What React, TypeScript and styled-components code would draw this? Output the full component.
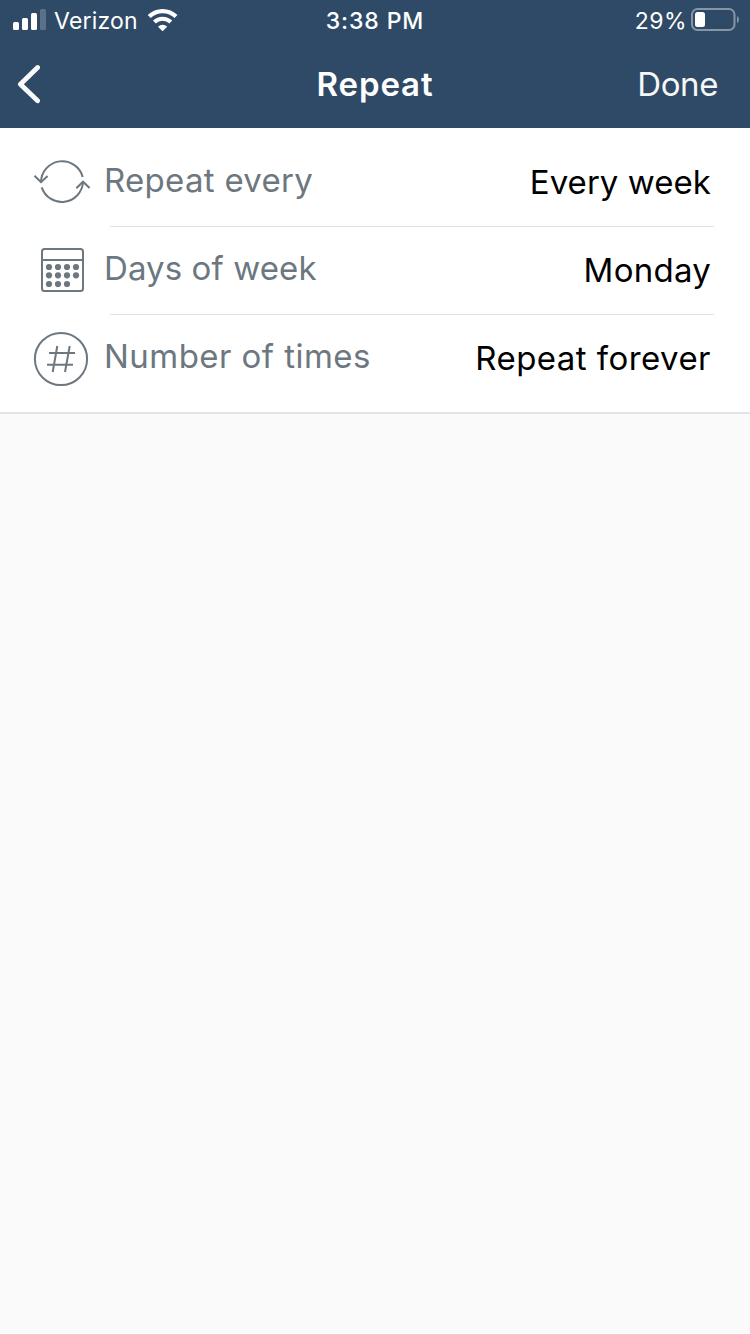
import React from "react";
import styled, { createGlobalStyle } from "styled-components";

const GlobalStyle = createGlobalStyle`
  * { box-sizing: border-box; }
  body {
    margin: 0;
    background: #fafafa;
    font-family: Inter, "Liberation Sans", sans-serif;
  }
`;

const Screen = styled.div`
  display: flex;
  flex-direction: column;
  width: 750px;
  height: 1334px;
  background: #fafafa;
  border-bottom: 1px solid #fff;
`;

const Header = styled.header`
  height: 128px;
  background: #2e4a67;
  color: #fff;
`;

const StatusBar = styled.div`
  display: grid;
  grid-template-columns: 1fr auto 1fr;
  align-items: center;
  height: 40px;
  padding: 0 10px 0 12px;
`;

const StatusGroup = styled.div<{ $end?: boolean }>`
  display: flex;
  align-items: center;
  justify-content: ${(p) => (p.$end ? "flex-end" : "flex-start")};
`;

const StatusText = styled.span<{ $spacing: number }>`
  font-size: 23px;
  line-height: 28px;
  padding-top: 2px;
  letter-spacing: ${(p) => p.$spacing}px;
  white-space: pre;
`;

const Carrier = styled(StatusText)`
  flex: none;
  width: 100px;
  padding-left: 7px;
`;

const Clock = styled(StatusText)`
  margin-right: 2px;
  font-weight: 550;
`;

const BatteryLevel = styled(StatusText)`
  margin-right: 4px;
`;

const NavBar = styled.nav`
  display: grid;
  grid-template-columns: 1fr auto 1fr;
  align-items: center;
  height: 88px;
  padding: 0 32px 0 16px;
`;

const BackButton = styled.button`
  display: flex;
  justify-self: start;
  padding: 0;
  border: 0;
  background: none;
`;

const Title = styled.h1`
  margin: 0 0 0 16px;
  font-size: 33px;
  line-height: 40px;
  font-weight: 600;
  letter-spacing: 0.9px;
`;

const DoneButton = styled.button`
  justify-self: end;
  padding: 0;
  border: 0;
  background: none;
  color: #f7f7f7;
  font: 400 33px/40px Inter, "Liberation Sans", sans-serif;
  letter-spacing: -0.4px;
`;

const List = styled.main`
  padding: 11px 0 9px;
  background: #fff;
  border-bottom: 2px solid #dfe5e8;
`;

const Row = styled.div`
  display: flex;
  height: 88px;
  padding: 0 36px 0 32px;
`;

const IconSlot = styled.div`
  flex: none;
  width: 78px;
  padding-top: 13px;
`;

const RowBody = styled.div<{ $divider: boolean }>`
  flex: 1;
  display: flex;
  justify-content: space-between;
  height: 88px;
  border-bottom: 1px solid ${(p) => (p.$divider ? "#dce5e6" : "transparent")};
`;

const Label = styled.span<{ $spacing: number }>`
  margin: 21px 0 0 -6px;
  font-size: 33px;
  line-height: 40px;
  letter-spacing: ${(p) => p.$spacing}px;
  color: #6c7780;
  white-space: nowrap;
`;

const Value = styled.span<{ $spacing: number }>`
  margin: 23px 3px 0 0;
  font-size: 33px;
  line-height: 40px;
  letter-spacing: ${(p) => p.$spacing}px;
  color: #000;
  white-space: nowrap;
`;

const SignalIcon = () => (
  <svg width="35" height="22" viewBox="12 9 35 22" fill="#fff">
    <rect x="13" y="22" width="6" height="8" rx="1.5" />
    <rect x="22" y="18" width="6" height="12" rx="1.5" />
    <rect x="31" y="13" width="6" height="17" rx="1.5" />
    <rect x="40" y="9" width="6" height="21" rx="1.5" opacity="0.22" />
  </svg>
);

const WifiIcon = () => (
  <svg width="32" height="24" viewBox="147 8 32 24" fill="none" stroke="#fff" strokeWidth="4.2">
    <path d="M149.2 16.6A19 19 0 0 1 176 16.6" />
    <path d="M154.4 22A12 12 0 0 1 170.8 22" />
    <path d="M162.6 31.2L158 26.8A6.4 6.4 0 0 1 167.2 26.8Z" fill="#fff" stroke="none" />
  </svg>
);

const BatteryIcon = () => (
  <svg width="49" height="24" viewBox="691 8 49 24" fill="none">
    <rect x="692" y="9" width="42.5" height="21" rx="5.5" stroke="#8796a6" strokeWidth="2" />
    <rect x="695" y="12" width="10" height="15" rx="2.5" fill="#fff" />
    <path d="M737 16Q739 17 739 19.5T737 23Z" fill="#8796a6" />
  </svg>
);

const BackIcon = () => (
  <svg width="26" height="40" viewBox="16 64 26 40" fill="none" stroke="#fafafa" strokeWidth="4.8" strokeLinecap="round" strokeLinejoin="round">
    <path d="M37.6 67.5L20.4 84.2L37.6 100.8" />
  </svg>
);

const IconSvg = styled.svg`
  display: block;
  width: 60px;
  height: 60px;
  fill: none;
  stroke: #6c7780;
  stroke-width: 2;
`;

const RepeatIcon = () => (
  <IconSvg viewBox="0 0 60 60">
    <path d="M9 30.4A21.2 21.2 0 0 1 50.7 25" />
    <path d="M9.7 35.4A21.2 21.2 0 0 0 51 30" />
    <path d="M2.5 23.7L9 30.2L15.6 24M44.3 36.2L51 29.7L57.6 36" />
  </IconSvg>
);

const CalendarIcon = () => (
  <IconSvg viewBox="0 0 60 60">
    <rect x="10" y="9" width="41" height="42" rx="2.5" />
    <path d="M10 20H51" />
    {[27, 35.3, 44].map((y, r) =>
      [17, 26, 35, 44]
        .slice(0, r === 2 ? 3 : 4)
        .map((x) => <circle key={`${x}-${y}`} cx={x} cy={y} r="3.1" fill="#6c7780" stroke="none" />)
    )}
  </IconSvg>
);

const NumberIcon = () => (
  <IconSvg viewBox="0 0 60 60">
    <circle cx="29" cy="31" r="26.1" />
    <path d="M25.3 18L20.7 44M37.7 18L33 44M17 25H43M15 36.8H41" />
  </IconSvg>
);

const rows = [
  { icon: <RepeatIcon />, label: "Repeat every", labelSpacing: 0.3, value: "Every week", valueSpacing: 0.05 },
  { icon: <CalendarIcon />, label: "Days of week", labelSpacing: 0.1, value: "Monday", valueSpacing: 0.25 },
  { icon: <NumberIcon />, label: "Number of times", labelSpacing: 0.45, value: "Repeat forever", valueSpacing: 0.45 },
];

export default function App() {
  return (
    <Screen>
      <GlobalStyle />
      <Header>
        <StatusBar>
          <StatusGroup>
            <SignalIcon />
            <Carrier $spacing={0.2}>Verizon</Carrier>
            <WifiIcon />
          </StatusGroup>
          <Clock $spacing={0.9}>3:38 PM</Clock>
          <StatusGroup $end>
            <BatteryLevel $spacing={0.5}>29%</BatteryLevel>
            <BatteryIcon />
          </StatusGroup>
        </StatusBar>
        <NavBar>
          <BackButton aria-label="Back">
            <BackIcon />
          </BackButton>
          <Title>Repeat</Title>
          <DoneButton>Done</DoneButton>
        </NavBar>
      </Header>
      <List>
        {rows.map((row, i) => (
          <Row key={row.label}>
            <IconSlot>{row.icon}</IconSlot>
            <RowBody $divider={i < rows.length - 1}>
              <Label $spacing={row.labelSpacing}>{row.label}</Label>
              <Value $spacing={row.valueSpacing}>{row.value}</Value>
            </RowBody>
          </Row>
        ))}
      </List>
    </Screen>
  );
}
